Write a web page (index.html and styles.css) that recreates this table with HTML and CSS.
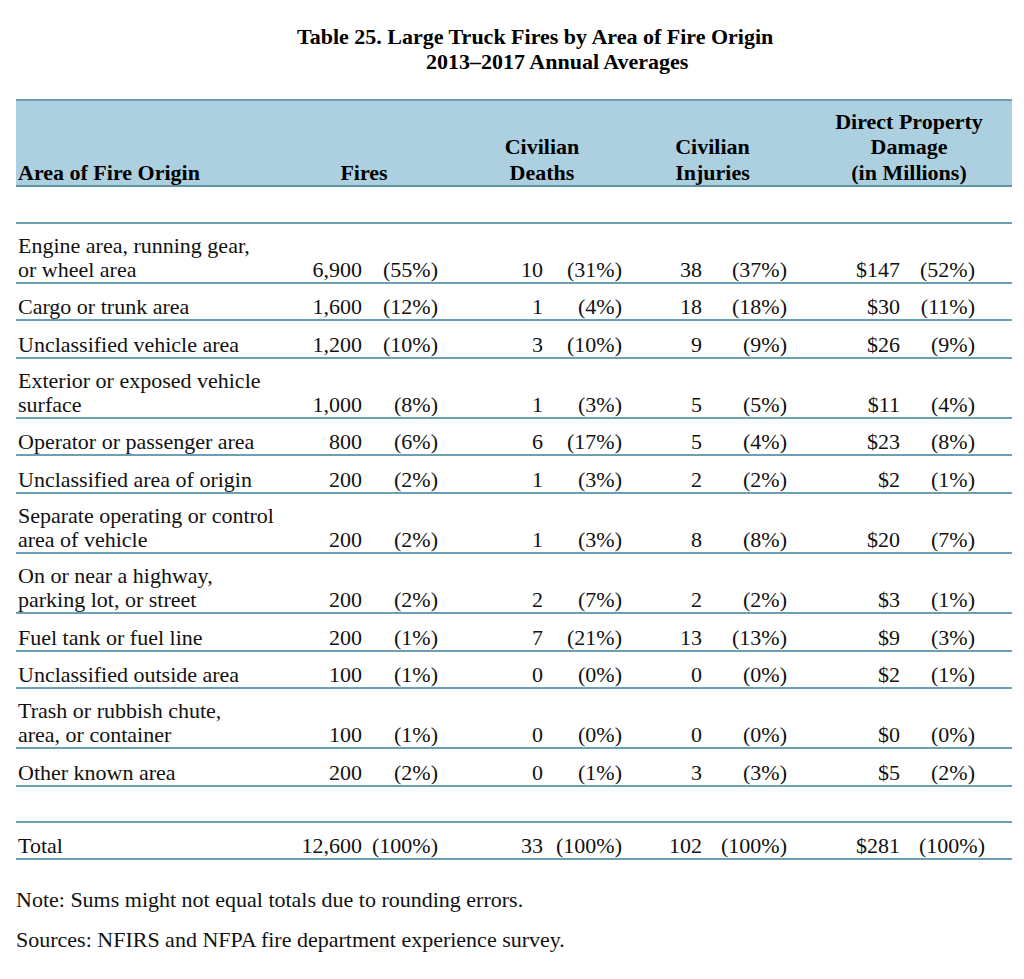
FILE: index.html
```html
<!DOCTYPE html>
<html lang="en">
<head>
<meta charset="utf-8">
<title>Table 25. Large Truck Fires by Area of Fire Origin</title>
<link rel="stylesheet" href="styles.css">
</head>
<body>
<div class="page">
  <div class="title">
    <div class="title-line first">Table 25. Large Truck Fires by Area of Fire Origin</div>
    <div class="title-line second">2013–2017 Annual Averages</div>
  </div>

  <div class="table">
    <div class="head">
      <div class="h-label">Area of Fire Origin</div>
      <div class="h-fires">Fires</div>
      <div class="h-deaths">Civilian<br>Deaths</div>
      <div class="h-inj">Civilian<br>Injuries</div>
      <div class="h-dmg">Direct Property<br>Damage<br>(in Millions)</div>
    </div>

    <div class="row blank"></div>

    <div class="row">
      <div class="label">Engine area, running gear,<br>or wheel area</div>
      <div class="n">6,900</div><div class="n">(55%)</div>
      <div class="n">10</div><div class="n">(31%)</div>
      <div class="n">38</div><div class="n">(37%)</div>
      <div class="n">$147</div><div class="n">(52%)</div>
    </div>
    <div class="row">
      <div class="label">Cargo or trunk area</div>
      <div class="n">1,600</div><div class="n">(12%)</div>
      <div class="n">1</div><div class="n">(4%)</div>
      <div class="n">18</div><div class="n">(18%)</div>
      <div class="n">$30</div><div class="n">(11%)</div>
    </div>
    <div class="row">
      <div class="label">Unclassified vehicle area</div>
      <div class="n">1,200</div><div class="n">(10%)</div>
      <div class="n">3</div><div class="n">(10%)</div>
      <div class="n">9</div><div class="n">(9%)</div>
      <div class="n">$26</div><div class="n">(9%)</div>
    </div>
    <div class="row">
      <div class="label">Exterior or exposed vehicle<br>surface</div>
      <div class="n">1,000</div><div class="n">(8%)</div>
      <div class="n">1</div><div class="n">(3%)</div>
      <div class="n">5</div><div class="n">(5%)</div>
      <div class="n">$11</div><div class="n">(4%)</div>
    </div>
    <div class="row">
      <div class="label">Operator or passenger area</div>
      <div class="n">800</div><div class="n">(6%)</div>
      <div class="n">6</div><div class="n">(17%)</div>
      <div class="n">5</div><div class="n">(4%)</div>
      <div class="n">$23</div><div class="n">(8%)</div>
    </div>
    <div class="row">
      <div class="label">Unclassified area of origin</div>
      <div class="n">200</div><div class="n">(2%)</div>
      <div class="n">1</div><div class="n">(3%)</div>
      <div class="n">2</div><div class="n">(2%)</div>
      <div class="n">$2</div><div class="n">(1%)</div>
    </div>
    <div class="row">
      <div class="label">Separate operating or control<br>area of vehicle</div>
      <div class="n">200</div><div class="n">(2%)</div>
      <div class="n">1</div><div class="n">(3%)</div>
      <div class="n">8</div><div class="n">(8%)</div>
      <div class="n">$20</div><div class="n">(7%)</div>
    </div>
    <div class="row">
      <div class="label">On or near a highway,<br>parking lot, or street</div>
      <div class="n">200</div><div class="n">(2%)</div>
      <div class="n">2</div><div class="n">(7%)</div>
      <div class="n">2</div><div class="n">(2%)</div>
      <div class="n">$3</div><div class="n">(1%)</div>
    </div>
    <div class="row">
      <div class="label">Fuel tank or fuel line</div>
      <div class="n">200</div><div class="n">(1%)</div>
      <div class="n">7</div><div class="n">(21%)</div>
      <div class="n">13</div><div class="n">(13%)</div>
      <div class="n">$9</div><div class="n">(3%)</div>
    </div>
    <div class="row">
      <div class="label">Unclassified outside area</div>
      <div class="n">100</div><div class="n">(1%)</div>
      <div class="n">0</div><div class="n">(0%)</div>
      <div class="n">0</div><div class="n">(0%)</div>
      <div class="n">$2</div><div class="n">(1%)</div>
    </div>
    <div class="row">
      <div class="label">Trash or rubbish chute,<br>area, or container</div>
      <div class="n">100</div><div class="n">(1%)</div>
      <div class="n">0</div><div class="n">(0%)</div>
      <div class="n">0</div><div class="n">(0%)</div>
      <div class="n">$0</div><div class="n">(0%)</div>
    </div>
    <div class="row">
      <div class="label">Other known area</div>
      <div class="n">200</div><div class="n">(2%)</div>
      <div class="n">0</div><div class="n">(1%)</div>
      <div class="n">3</div><div class="n">(3%)</div>
      <div class="n">$5</div><div class="n">(2%)</div>
    </div>

    <div class="row blank short"></div>

    <div class="row">
      <div class="label">Total</div>
      <div class="n">12,600</div><div class="n">(100%)</div>
      <div class="n">33</div><div class="n">(100%)</div>
      <div class="n">102</div><div class="n">(100%)</div>
      <div class="n">$281</div><div class="n"><span class="overhang">(100%)</span></div>
    </div>
  </div>

  <p class="note">Note: Sums might not equal totals due to rounding errors.</p>
  <p class="note second-note">Sources: NFIRS and NFPA fire department experience survey.</p>
</div>
</body>
</html>
```

FILE: styles.css
```css
* {
  box-sizing: border-box;
}

html, body {
  margin: 0;
  padding: 0;
  background: #ffffff;
}

body {
  font-family: "Liberation Serif", "Times New Roman", serif;
  font-size: 22px;
  color: #111111;
}

.page {
  width: 1024px;
  padding: 24px 12px 0 16px;
}

.title {
  font-weight: bold;
  line-height: 25px;
  color: #000;
}

.title-line.first {
  padding-left: 281px;
}

.title-line.second {
  padding-left: 410px;
}

.table {
  margin-top: 25px;
  width: 996px;
}

.head {
  display: grid;
  grid-template-columns: 274px 148px 184px 165px 225px;
  align-items: end;
  height: 88px;
  background: #acd0df;
  border-top: 2px solid #6c9fb4;
  border-bottom: 2px solid #5f93a9;
  font-weight: bold;
  line-height: 25.3px;
  color: #000;
}

.h-label {
  padding-left: 2px;
}

.h-fires {
  text-align: center;
}

.h-deaths {
  text-align: center;
  padding-left: 24px;
}

.h-inj {
  text-align: center;
  padding-left: 16px;
}

.h-dmg {
  text-align: center;
  padding-left: 31px;
  padding-right: 12px;
}

.row {
  display: grid;
  grid-template-columns: 274px 72px 76px 105px 79px 80px 85px 113px 75px 37px;
  align-items: end;
  min-height: 37.6px;
  padding-top: 10px;
  border-bottom: 2px solid #6b9fb4;
  line-height: 24px;
}

.row.blank {
  min-height: 36.7px;
}

.row.blank.short {
  min-height: 36px;
}

.label {
  padding-left: 2px;
}

.n {
  text-align: right;
  white-space: nowrap;
}

.overhang {
  display: inline-block;
  margin-right: -10px;
}

.note {
  margin: 28px 0 0 0;
  line-height: 24px;
}

.note.second-note {
  margin-top: 16px;
}
```
